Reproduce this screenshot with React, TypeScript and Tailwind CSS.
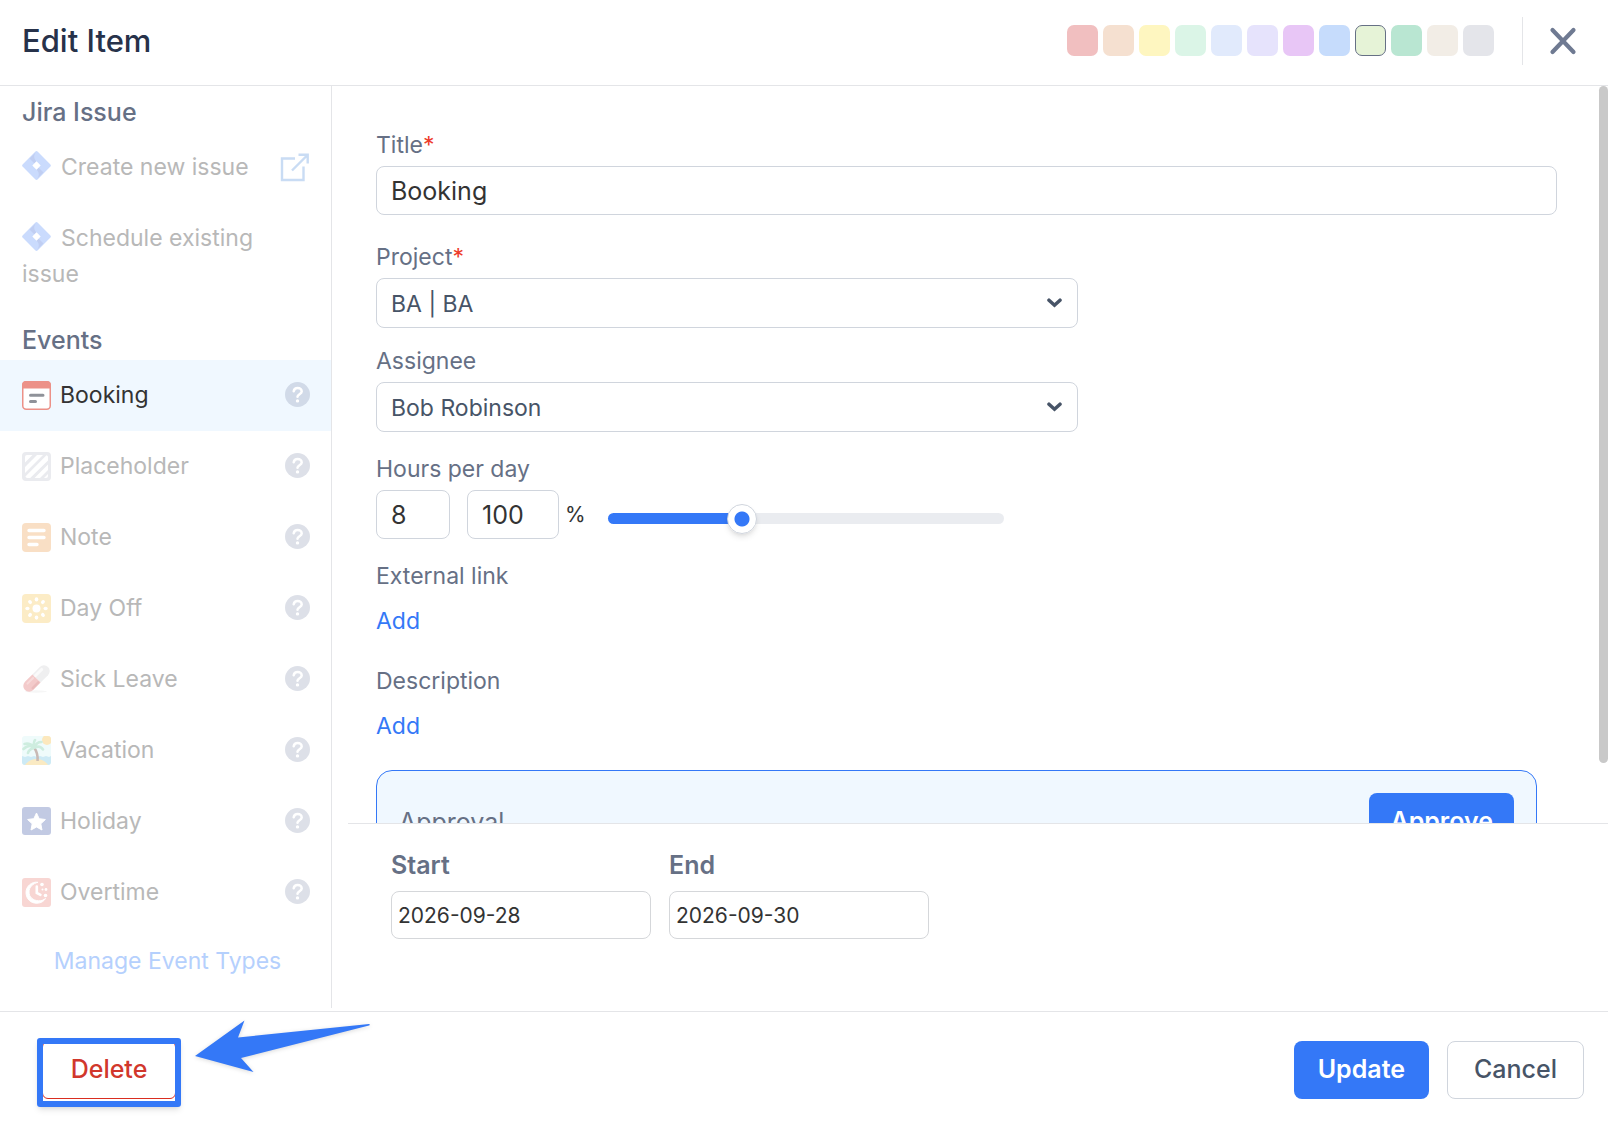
import { useState, type ReactNode } from "react";
import clsx from "clsx";

interface EventType {
  name: string;
  icon: ReactNode;
}

const MAX_PERCENT = 308;

const COLORS = [
  { name: "Red", className: "bg-[#f1bfc0]" },
  { name: "Orange", className: "bg-[#f5e0d0]" },
  { name: "Yellow", className: "bg-[#fef6c0]" },
  { name: "Mint", className: "bg-[#dbf5e7]" },
  { name: "Sky", className: "bg-[#e1eafc]" },
  { name: "Lavender", className: "bg-[#e6e3fc]" },
  { name: "Purple", className: "bg-[#e8c6f6]" },
  { name: "Blue", className: "bg-[#c6dcfc]" },
  { name: "Lime", className: "bg-[#e6f3d7]" },
  { name: "Green", className: "bg-[#b9e6d2]" },
  { name: "Sand", className: "bg-[#f2ede6]" },
  { name: "Gray", className: "bg-[#e4e5ea]" },
];

function BookingIcon() {
  return (
    <svg viewBox="0 0 29 29" className="size-[29px]">
      <rect x="0.75" y="0.75" width="27.5" height="27.5" rx="3.5" fill="#fff" stroke="#ec9188" strokeWidth="1.5" />
      <path d="M0 7.5V4a4 4 0 0 1 4-4h21a4 4 0 0 1 4 4v3.5z" fill="#ec9188" />
      <path d="M8.5 14.3h12.5M8.5 20.5h5" stroke="#8f9299" strokeWidth="3" strokeLinecap="round" />
    </svg>
  );
}

function PlaceholderIcon() {
  return (
    <svg viewBox="0 0 29 29" className="size-[29px]">
      <rect width="29" height="29" rx="4" fill="#eaebef" />
      <path
        d="M5 3h5.5L3 10.5V5a2 2 0 0 1 2-2zM15 3h6L3 21v-6zM24.5 3.2L3.4 24.6c.4.9.9 1.4 1.8 1.4h3L26 8.5V5c0-.9-.6-1.6-1.5-1.8zM26 12.5V18l-8 8h-5.5zM26 22v2a2 2 0 0 1-2 2h-2z"
        fill="#fff"
      />
    </svg>
  );
}

function NoteIcon() {
  return (
    <svg viewBox="0 0 29 29" className="size-[29px]">
      <rect width="29" height="29" rx="4" fill="#f9dfc5" />
      <path d="M7 7.5h15M7 14.5h15M7 21.5h8" stroke="#fff" strokeWidth="3.4" strokeLinecap="round" />
    </svg>
  );
}

function DayOffIcon() {
  return (
    <svg viewBox="0 0 29 29" className="size-[29px]">
      <rect width="29" height="29" rx="4" fill="#fcecc6" />
      <circle cx="14.5" cy="14.5" r="4" fill="#fff" />
      <g fill="#fff">
        {[0, 45, 90, 135, 180, 225, 270, 315].map((angle) => (
          <ellipse key={angle} cx="14.5" cy="5.4" rx="1.8" ry="2.1" transform={`rotate(${angle} 14.5 14.5)`} />
        ))}
      </g>
    </svg>
  );
}

function SickLeaveIcon() {
  return (
    <svg viewBox="0 0 29 29" className="size-[29px]">
      <ellipse cx="14" cy="26.5" rx="11" ry="1.2" fill="#f6f6f6" />
      <g transform="rotate(45 14.5 13.5)">
        <path d="M8.7 13.5V3a5.8 5.8 0 0 1 11.6 0v10.5z" fill="#efeff0" />
        <path d="M8.7 13.5V24a5.8 5.8 0 0 0 11.600 0V13.5z" fill="#f3caca" />
        <path d="M11.700 3.500v8.500" stroke="#fafafa" strokeWidth="3" strokeLinecap="round" />
        <path d="M11.700 15.500v8" stroke="#f7dada" strokeWidth="2" strokeLinecap="round" />
        <path d="M18.600 15v8" stroke="#eabcbc" strokeWidth="2.400" strokeLinecap="round" />
      </g>
    </svg>
  );
}

function VacationIcon() {
  return (
    <svg viewBox="0 0 29 29" className="size-[29px]">
      <clipPath id="vacation-frame">
        <rect width="29" height="29" rx="3" />
      </clipPath>
      <g clipPath="url(#vacation-frame)">
        <rect width="29" height="29" fill="#effbfb" />
        <circle cx="25" cy="4" r="5" fill="#fce8bd" />
        <path d="M0 20l3 1 3-1 3 1 3-1 3 1 3-1 3 1 3-1 3 1 2-1v9H0z" fill="#cdeaf5" />
        <path d="M3 29c3-4 7-6 11.500-6s9 2 11.500 6z" fill="#faeac3" />
        <path d="M12 11.500c3 4 4 8 3.600 13.500" stroke="#c9bab5" strokeWidth="2.600" fill="none" />
        <path
          d="M12 11.500C9 9 5 9.500 1.500 13M12 11c-3-3-6-4-9.500-3M12.500 11c-1-3-1-5 .5-7M13 11c1-4 4-5 6.500-5M13 11.500c3-1.500 6-1 8 2M11.500 12c-3 1-5 2.500-5.500 5"
          stroke="#ceeddf"
          strokeWidth="2.600"
          strokeLinecap="round"
          fill="none"
        />
      </g>
    </svg>
  );
}

function HolidayIcon() {
  return (
    <svg viewBox="0 0 29 29" className="size-[29px]">
      <rect width="29" height="28" rx="3" fill="#c2cae3" />
      <path
        d="M14.500 6l2.700 5.700 6.200.8-4.600 4.300 1.200 6.200-5.500-3-5.500 3 1.200-6.200-4.600-4.300 6.200-.8z"
        fill="#fff"
        stroke="#fff"
        strokeLinejoin="round"
      />
    </svg>
  );
}

function OvertimeIcon() {
  return (
    <svg viewBox="0 0 29 29" className="size-[29px]">
      <rect width="29" height="29" rx="3" fill="#f8d6d3" />
      <path
        d="M16 4.300C10 3.300 4 8 4 14.500S9 25.500 15 25.200c4 0 7-2 8.500-4.700-1.500 1.200-4 2.500-7 2.300C11 22.500 7 19 7 14S11 5.500 16 4.300z"
        fill="#fff"
        stroke="#fff"
      />
      <path d="M14.800 8.500v6.500l3.700 1.800" stroke="#fff" strokeWidth="2.600" strokeLinecap="round" fill="none" />
      <circle cx="20" cy="6.500" r="1.800" fill="#fff" />
      <circle cx="24" cy="11.500" r="1.400" fill="#fff" />
      <circle cx="20.500" cy="11.500" r="1" fill="#fff" />
      <circle cx="23.500" cy="17.500" r="1.800" fill="#fff" />
    </svg>
  );
}

function JiraIcon() {
  return (
    <svg viewBox="0 0 29 29" className="mr-[10px] inline-block size-[29px] align-[-5px]">
      <path
        d="M13.200.8a1.800 1.800 0 0 1 2.600 0l12.400 12.400a1.800 1.800 0 0 1 0 2.600L15.800 28.200a1.800 1.800 0 0 1-2.600 0L.8 15.800a1.800 1.800 0 0 1 0-2.600z"
        fill="#cadbfd"
      />
      <path d="M14.500 10.500c-3-3-3-6.500-.2-9.700L7.500 7.500l5 5zM14.500 18.500c3 3 3 6.500.2 9.700l6.800-6.700-5-5z" fill="#c0cef2" />
      <path d="M14.500 10.300l4.200 4.200-4.200 4.200-4.200-4.200z" fill="#fff" />
    </svg>
  );
}

function ExternalLinkIcon() {
  return (
    <svg viewBox="0 0 29 29" className="size-[29px] shrink-0" fill="none" stroke="#c9dcf4" strokeWidth="2.400">
      <path d="M15 5.500H2v21.500h21.500V13.500" />
      <path d="M12 17.500L27 2.500M18.500 1.700H27.700V10.500" />
    </svg>
  );
}

function HelpIcon() {
  return (
    <svg viewBox="0 0 25 25" className="size-[25px]">
      <circle cx="12.500" cy="12.500" r="12.500" fill="#55648c" fillOpacity="0.2" />
      <path
        d="M8.700 9.200c.4-2 2-3.100 4-3.100 2.300 0 4 1.400 4 3.300 0 2.700-4.200 2.900-4.200 5.400"
        fill="none"
        stroke="#fff"
        strokeWidth="2.500"
        strokeLinecap="round"
      />
      <circle cx="12.500" cy="18.900" r="1.700" fill="#fff" />
    </svg>
  );
}

function ChevronIcon() {
  return (
    <svg
      viewBox="0 0 15 10"
      className="pointer-events-none absolute top-1/2 right-4 h-[10px] w-[15px] -translate-y-1/2"
      fill="none"
      stroke="#475467"
      strokeWidth="3.500"
      strokeLinecap="round"
    >
      <path d="M2 2.200l5.500 5 5.500-5" />
    </svg>
  );
}

const EVENT_TYPES: EventType[] = [
  { name: "Booking", icon: <BookingIcon /> },
  { name: "Placeholder", icon: <PlaceholderIcon /> },
  { name: "Note", icon: <NoteIcon /> },
  { name: "Day Off", icon: <DayOffIcon /> },
  { name: "Sick Leave", icon: <SickLeaveIcon /> },
  { name: "Vacation", icon: <VacationIcon /> },
  { name: "Holiday", icon: <HolidayIcon /> },
  { name: "Overtime", icon: <OvertimeIcon /> },
];

function Header() {
  const [color, setColor] = useState("Lime");

  return (
    <header className="flex h-[86px] shrink-0 items-center border-b border-[#e4e5e8] pr-[31px] pb-1 pl-[22px]">
      <h1 className="text-[31px] leading-9 font-medium text-[#27324a]">Edit Item</h1>
      <div className="ml-auto flex gap-[5px]">
        {COLORS.map(({ name, className }) => (
          <button
            key={name}
            type="button"
            aria-label={name}
            onClick={() => setColor(name)}
            className={clsx("size-[31px] rounded-[7px]", className, color === name && "border border-[#667085]")}
          />
        ))}
      </div>
      <div className="ml-7 h-12 w-px bg-[#e4e5e8]" />
      <button type="button" aria-label="Close" className="ml-[26px]">
        <svg viewBox="0 0 28 28" className="size-7" fill="none" stroke="#6f7a92" strokeWidth="4.200" strokeLinecap="round">
          <path d="M3.500 3l21 22M24.500 3l-21 22" />
        </svg>
      </button>
    </header>
  );
}

function SidebarHeading({ children }: { children: ReactNode }) {
  return <h2 className="mb-1 px-[22px] text-[25px] leading-8 font-medium text-[#667085]">{children}</h2>;
}

function Sidebar() {
  const [selected, setSelected] = useState("Booking");

  return (
    <aside className="w-[332px] shrink-0 overflow-hidden border-r border-[#e4e5e8] pt-[10px] text-[23px] leading-9 text-[#b8b8b8]">
      <SidebarHeading>Jira Issue</SidebarHeading>
      <button type="button" className="flex w-full items-center justify-between px-[22px] pt-[17px] pb-[18px] text-left">
        <span>
          <JiraIcon />
          Create new issue
        </span>
        <ExternalLinkIcon />
      </button>
      <button type="button" className="mb-[14px] block w-full px-[22px] pt-[17px] pb-[18px] text-left">
        <JiraIcon />
        Schedule existing issue
      </button>
      <SidebarHeading>Events</SidebarHeading>
      <ul>
        {EVENT_TYPES.map(({ name, icon }) => (
          <li
            key={name}
            className={clsx("flex items-center pr-[21px] pl-[22px]", name === selected && "bg-[#f0f8ff] text-[#333]")}
          >
            <button
              type="button"
              onClick={() => setSelected(name)}
              className="flex flex-1 items-center gap-[9px] pt-[17px] pb-[18px] text-left"
            >
              {icon}
              {name}
            </button>
            <button type="button" aria-label={`About ${name}`} className="pb-[2px]">
              <HelpIcon />
            </button>
          </li>
        ))}
      </ul>
      <a href="#event-types" className="mt-[15px] block pl-1 text-center text-[#b5d0fd]">
        Manage Event Types
      </a>
    </aside>
  );
}

interface FieldLabelProps {
  htmlFor?: string;
  required?: boolean;
  children: ReactNode;
}

function FieldLabel({ htmlFor, required, children }: FieldLabelProps) {
  return (
    <label htmlFor={htmlFor} className="mb-[5px] block text-[23px] leading-8 text-[#667085]">
      {children}
      {required && <span className="text-[#ee3b2b]">*</span>}
    </label>
  );
}

function SelectField({ id, value }: { id: string; value: string }) {
  return (
    <div className="relative w-3/5 max-w-[702px] min-w-[400px]">
      <select
        id={id}
        defaultValue={value}
        className="h-[50px] w-full appearance-none rounded-lg border border-[#d0d5dd] bg-white px-[14px] pt-[2px] text-[23px] text-[#475467]"
      >
        <option>{value}</option>
      </select>
      <ChevronIcon />
    </div>
  );
}

function HoursField() {
  const [percent, setPercent] = useState(100);

  return (
    <div className="flex items-center">
      <input
        id="hours"
        defaultValue="8"
        className="h-[49px] w-[74px] rounded-lg border border-[#d0d5dd] px-[14px] text-[25px] text-[#333]"
      />
      <input
        aria-label="Percent"
        value={percent}
        onChange={(e) => setPercent(Number(e.target.value) || 0)}
        className="ml-[17px] h-[49px] w-[92px] rounded-lg border border-[#d0d5dd] px-[14px] text-[25px] text-[#333]"
      />
      <span className="ml-[6px] w-[43px] text-[21px] text-[#333]">%</span>
      <input
        type="range"
        aria-label="Workload"
        min={0}
        max={MAX_PERCENT}
        value={percent}
        onChange={(e) => setPercent(Number(e.target.value))}
        style={{
          backgroundImage: `linear-gradient(to right, #3478f7 ${(percent / MAX_PERCENT) * 100}%, #eaecf0 0)`,
        }}
        className="mt-2 h-[11px] w-[396px] appearance-none rounded-full [&::-webkit-slider-thumb]:size-[30px] [&::-webkit-slider-thumb]:appearance-none [&::-webkit-slider-thumb]:rounded-full [&::-webkit-slider-thumb]:border [&::-webkit-slider-thumb]:border-[#d0d5dd] [&::-webkit-slider-thumb]:bg-[radial-gradient(circle,#3478f7_7px,#fff_8px)] [&::-webkit-slider-thumb]:shadow-md"
      />
    </div>
  );
}

function DateField({ id, label, value }: { id: string; label: string; value: string }) {
  return (
    <div>
      <label htmlFor={id} className="mb-[10px] block text-[25px] leading-8 font-semibold text-[#667085]">
        {label}
      </label>
      <input
        id={id}
        defaultValue={value}
        className="h-12 w-[260px] rounded-lg border border-[#d5d7da] px-[6px] text-[21px] text-[#333]"
      />
    </div>
  );
}

function ItemForm() {
  return (
    <main className="relative flex min-w-0 flex-1 flex-col">
      <div className="min-h-0 flex-1 overflow-y-auto pt-[43px] pr-[51px] pl-11 [scrollbar-width:none]">
        <FieldLabel htmlFor="title" required>
          Title
        </FieldLabel>
        <input
          id="title"
          defaultValue="Booking"
          className="mb-[26px] block h-[49px] w-full rounded-lg border border-[#d0d5dd] px-[14px] text-[25px] text-[#333]"
        />
        <FieldLabel htmlFor="project" required>
          Project
        </FieldLabel>
        <SelectField id="project" value="BA | BA" />
        <div className="mt-[17px]">
          <FieldLabel htmlFor="assignee">Assignee</FieldLabel>
          <SelectField id="assignee" value="Bob Robinson" />
        </div>
        <div className="mt-[21px]">
          <FieldLabel htmlFor="hours">Hours per day</FieldLabel>
          <HoursField />
        </div>
        <div className="mt-[21px] text-[23px] leading-8">
          <h3 className="text-[#667085]">External link</h3>
          <button type="button" className="mt-[13px] block text-[#3478f7]">
            Add
          </button>
          <h3 className="mt-7 text-[#667085]">Description</h3>
          <button type="button" className="mt-[13px] block text-[#3478f7]">
            Add
          </button>
        </div>
        <div className="mt-7 mr-5 flex items-center justify-between rounded-2xl border border-[#3478f7] bg-[#f0f8ff] p-[22px]">
          <span className="text-[25px] leading-8 text-[#667085]">Approval</span>
          <button type="button" className="h-[58px] rounded-lg bg-[#3478f7] px-[21px] text-[25px] font-semibold text-white">
            Approve
          </button>
        </div>
      </div>
      <div className="ml-4 flex h-[185px] shrink-0 gap-[18px] border-t border-[#e4e5e8] pt-[25px] pl-[43px]">
        <DateField id="start" label="Start" value="2026-09-28" />
        <DateField id="end" label="End" value="2026-09-30" />
      </div>
      <div className="absolute top-0 right-0 h-[73.4%] w-[9px] rounded-full bg-[#c9c9c9]" />
    </main>
  );
}

function Footer() {
  return (
    <footer className="flex shrink-0 items-start gap-[18px] border-t border-[#e4e5e8] pt-[29px] pr-6 pb-[23px] pl-[42px] text-[25px] font-medium">
      <div className="relative mr-auto">
        <button type="button" className="h-[58px] w-[134px] rounded-md border border-[#d92d20] bg-white text-[#d1372c]">
          Delete
        </button>
        <div className="pointer-events-none absolute -top-[3px] -right-[5px] -bottom-2 -left-[5px] rounded-[3px] border-[6px] border-[#3478f7] shadow-md" />
        <svg
          viewBox="0 0 178 56"
          className="pointer-events-none absolute -top-[22px] left-[152px] h-14 w-[178px] drop-shadow-sm"
          fill="#3478f7"
        >
          <path d="M1 37L50.500 1.500 44 18.500 175 5q1.500.5 0 1.500L47 39l12.500 14z" />
        </svg>
      </div>
      <button type="button" className="h-[58px] rounded-lg bg-[#3478f7] px-6 font-semibold text-white">
        Update
      </button>
      <button type="button" className="h-[58px] rounded-lg border border-[#d0d5dd] bg-white px-[26px] text-[#475467]">
        Cancel
      </button>
    </footer>
  );
}

export default function App() {
  return (
    <div className="flex h-screen flex-col bg-white font-[Inter,sans-serif]">
      <Header />
      <div className="flex min-h-0 flex-1 pb-[3px]">
        <Sidebar />
        <ItemForm />
      </div>
      <Footer />
    </div>
  );
}
